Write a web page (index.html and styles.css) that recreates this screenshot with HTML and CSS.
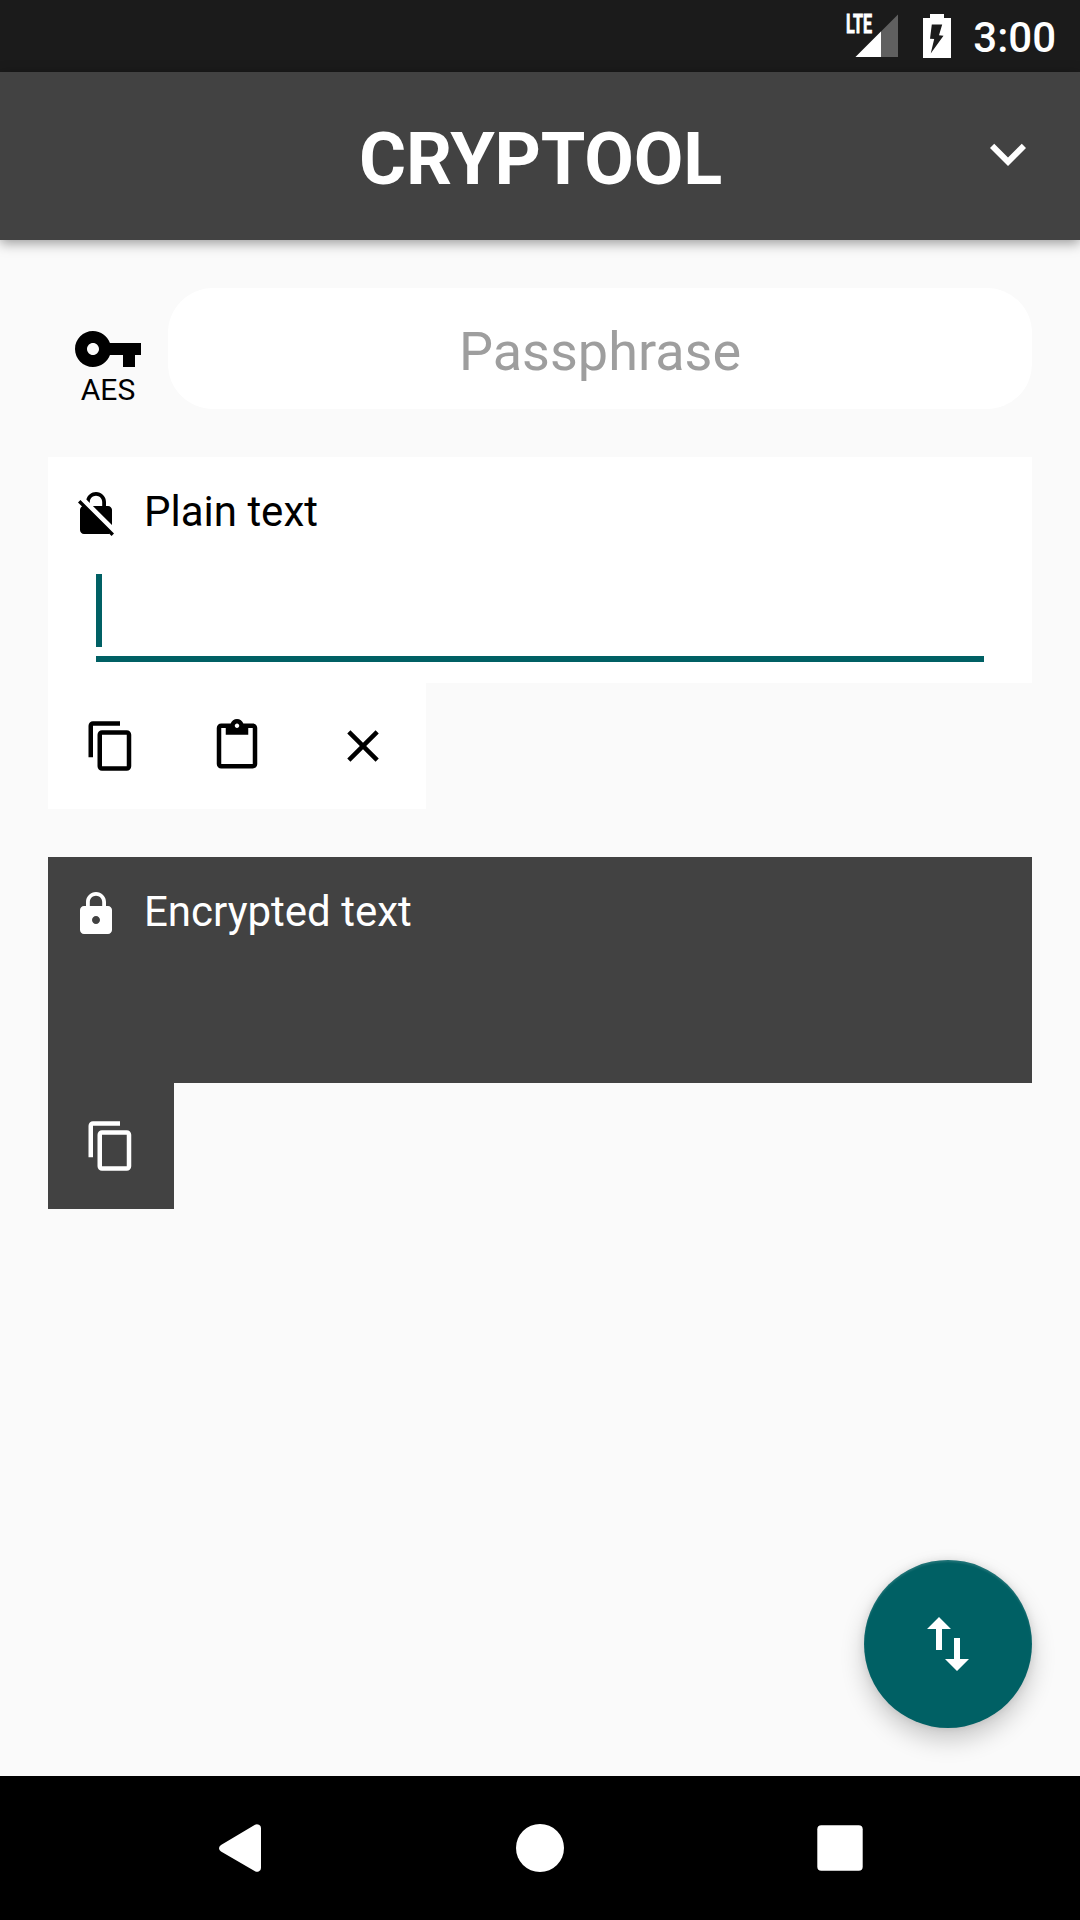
FILE: index.html
```html
<!DOCTYPE html>
<html lang="en">
<head>
<meta charset="utf-8">
<title>Cryptool</title>
<link rel="stylesheet" href="styles.css">
</head>
<body>
<div class="screen">
  <div class="status-bar">
    <svg class="signal" viewBox="0 -8 54 52" width="54" height="52">
      <path d="M53 0.500V43H10.500z" fill="#606060"/>
      <path d="M36 17.500V43H10.500z" fill="#fff"/>
      <text x="1" y="19.300" class="network" textLength="26" lengthAdjust="spacingAndGlyphs">LTE</text>
    </svg>
    <svg class="battery" viewBox="0 0 28 44" width="28" height="44">
      <path fill="#fff" fill-rule="evenodd" d="M7 0h14v4h7v40H0V4h7zM8.800 10.500L7 24.700l4.200.4L7.700 39.500 20.500 21.800l-4.500-.5L19.200 10.500z"/>
    </svg>
    <span class="clock">3:00</span>
  </div>

  <header class="app-bar">
    <h1 class="title">CRYPTOOL</h1>
    <svg class="icon-72 chevron" viewBox="0 0 24 24"><path d="M16.590 8.590L12 13.170 7.410 8.590 6 10l6 6 6-6z"/></svg>
  </header>

  <main class="content">
    <div class="pass-row">
      <div class="cipher">
        <svg class="icon-72" viewBox="0 0 24 24"><path d="M12.650 10C11.830 7.670 9.610 6 7 6c-3.310 0-6 2.690-6 6s2.690 6 6 6c2.610 0 4.830-1.670 5.650-4H17v4h4v-4h2v-4H12.650zM7 14c-1.100 0-2-.9-2-2s.9-2 2-2 2 .9 2 2-.9 2-2 2z"/></svg>
        <span class="cipher-name">AES</span>
      </div>
      <div class="passphrase">Passphrase</div>
    </div>

    <section class="block plain">
      <div class="card">
        <div class="card-head">
          <svg class="icon-48" viewBox="0 0 24 24"><path d="M21 21.780L4.220 5 3 6.220l2.040 2.040C4.420 8.600 4 9.250 4 10v10c0 1.100.9 2 2 2h12c.23 0 .45-.05.66-.12L19.780 23 21 21.780zM8.900 6c0-1.710 1.390-3.100 3.100-3.100s3.100 1.390 3.100 3.100v2h-4.660L20 17.560V10c0-1.100-.9-2-2-2h-1V6c0-2.760-2.240-5-5-5-2.320 0-4.260 1.590-4.820 3.740L8.900 6.460V6z"/></svg>
          <span class="card-label">Plain text</span>
        </div>
        <div class="field"><span class="caret"></span></div>
      </div>
      <div class="actions">
        <svg class="icon-54" viewBox="0 0 24 24"><path d="M16 1H4c-1.100 0-2 .9-2 2v14h2V3h12V1zm3 4H8c-1.100 0-2 .9-2 2v14c0 1.100.9 2 2 2h11c1.100 0 2-.9 2-2V7c0-1.100-.9-2-2-2zm0 16H8V7h11v14z"/></svg>
        <svg class="icon-54" viewBox="0 0 24 24"><path d="M19 2h-4.180C14.400.84 13.300 0 12 0c-1.300 0-2.400.84-2.820 2H5c-1.100 0-2 .9-2 2v16c0 1.100.9 2 2 2h14c1.100 0 2-.9 2-2V4c0-1.100-.9-2-2-2zm-7 0c.55 0 1 .45 1 1s-.45 1-1 1-1-.45-1-1 .45-1 1-1zm7 18H5V4h2v3h10V4h2v16z"/></svg>
        <svg class="icon-54" viewBox="0 0 24 24"><path d="M19 6.410L17.590 5 12 10.590 6.410 5 5 6.410 10.590 12 5 17.590 6.410 19 12 13.410 17.590 19 19 17.590 13.410 12z"/></svg>
      </div>
    </section>

    <section class="block encrypted">
      <div class="card">
        <div class="card-head">
          <svg class="icon-48" viewBox="0 0 24 24"><path d="M18 8h-1V6c0-2.760-2.240-5-5-5S7 3.240 7 6v2H6c-1.100 0-2 .9-2 2v10c0 1.100.9 2 2 2h12c1.100 0 2-.9 2-2V10c0-1.100-.9-2-2-2zm-6 9c-1.100 0-2-.9-2-2s.9-2 2-2 2 .9 2 2-.9 2-2 2zm3.100-9H8.900V6c0-1.710 1.390-3.100 3.100-3.100 1.710 0 3.100 1.390 3.100 3.100v2z"/></svg>
          <span class="card-label">Encrypted text</span>
        </div>
      </div>
      <div class="actions">
        <svg class="icon-54" viewBox="0 0 24 24"><path d="M16 1H4c-1.100 0-2 .9-2 2v14h2V3h12V1zm3 4H8c-1.100 0-2 .9-2 2v14c0 1.100.9 2 2 2h11c1.100 0 2-.9 2-2V7c0-1.100-.9-2-2-2zm0 16H8V7h11v14z"/></svg>
      </div>
    </section>

    <div class="fab">
      <svg class="icon-72" viewBox="0 0 24 24"><path d="M16 17.010V10h-2v7.010h-3L15 21l4-3.990h-3zM9 3L5 6.990h3V14h2V6.990h3L9 3z"/></svg>
    </div>
  </main>

  <nav class="nav-bar">
    <svg class="nav-icon" viewBox="0 0 48 48"><path d="M5 21L39 .7Q41 -.4 43 .8Q45 1.800 45 4V44Q45 46.200 43 47.300Q41 48.400 39 47.300L5 27.500Q3 26.300 3 24.300Q3 22.300 5 21z"/></svg>
    <svg class="nav-icon" viewBox="0 0 48 48"><circle cx="24" cy="24" r="24"/></svg>
    <svg class="nav-icon" viewBox="0 0 48 48"><rect x="1.300" y="1.300" width="45.400" height="45.400" rx="4"/></svg>
  </nav>
</div>
</body>
</html>
```
FILE: styles.css
```css
* {
  box-sizing: border-box;
}

body {
  margin: 0;
  font-family: Roboto, "Liberation Sans", sans-serif;
  color: #000;
}

svg {
  display: block;
  flex: none;
  fill: currentColor;
}

.screen {
  display: flex;
  flex-direction: column;
  width: 1080px;
  height: 1920px;
  overflow: hidden;
  background: #fafafa;
}

.status-bar {
  display: flex;
  justify-content: flex-end;
  height: 72px;
  padding: 14px 24px 0 0;
  background: #1b1b1b;
  color: #fff;
}

.signal {
  margin-top: -8px;
}

.battery {
  margin: 0 22px 0 24px;
}

.network {
  font-size: 25px;
  font-weight: 700;
  fill: #fff;
  stroke: #fff;
  stroke-width: 0.8px;
}

.clock {
  font-size: 42px;
  font-weight: 500;
  line-height: 48px;
}

.app-bar {
  z-index: 1;
  display: grid;
  grid-template-columns: 72px 1fr 72px;
  height: 168px;
  padding: 0 36px;
  background: #424242;
  color: #fff;
  box-shadow: 0 3px 12px rgba(0, 0, 0, 0.4);
}

.title {
  grid-column: 2;
  margin: 0;
  padding-left: 1px;
  font-size: 72px;
  font-weight: 700;
  letter-spacing: -0.2px;
  line-height: 175px;
  text-align: center;
}

.chevron {
  margin-top: 46px;
}

.icon-72 {
  width: 72px;
  height: 72px;
}

.icon-54 {
  width: 54px;
  height: 54px;
}

.icon-48 {
  width: 48px;
  height: 48px;
}

.content {
  position: relative;
  display: flex;
  flex: 1;
  flex-direction: column;
  gap: 48px;
  padding: 48px;
}

.pass-row {
  display: flex;
  height: 121px;
}

.cipher {
  display: flex;
  flex-direction: column;
  align-items: center;
  width: 120px;
  padding-top: 25px;
}

.cipher-name {
  margin-top: -13px;
  font-size: 30px;
  line-height: 35px;
}

.passphrase {
  flex: 1;
  border-radius: 45px;
  background: #fff;
  color: #9e9e9e;
  font-size: 54px;
  line-height: 127px;
  text-align: center;
}

.block {
  display: flex;
  flex-direction: column;
  align-items: flex-start;
}

.plain .card,
.plain .actions {
  background: #fff;
}

.encrypted .card,
.encrypted .actions {
  background: #424242;
  color: #fff;
}

.card {
  align-self: stretch;
  height: 226px;
  padding: 33px 48px 0 24px;
}

.card-head {
  display: flex;
  gap: 24px;
}

.card-label {
  font-size: 42px;
  line-height: 43px;
}

.field {
  height: 88px;
  margin: 36px 0 0 24px;
  border-bottom: 6px solid #006064;
}

.caret {
  display: block;
  width: 6px;
  height: 73px;
  background: #006064;
}

.actions {
  display: flex;
  gap: 72px;
  padding: 36px;
}

.fab {
  position: absolute;
  right: 48px;
  bottom: 48px;
  display: grid;
  place-items: center;
  width: 168px;
  height: 168px;
  border-radius: 50%;
  background: #006064;
  color: #fff;
  box-shadow: 0 12px 24px rgba(0, 0, 0, 0.2), 0 0 8px rgba(0, 0, 0, 0.1), inset 0 2px 2px rgba(255, 255, 255, 0.12);
}

.nav-bar {
  display: flex;
  align-items: center;
  justify-content: center;
  gap: 252px;
  height: 144px;
  background: #000;
  color: #fff;
}

.nav-icon {
  width: 48px;
  height: 48px;
}
```
